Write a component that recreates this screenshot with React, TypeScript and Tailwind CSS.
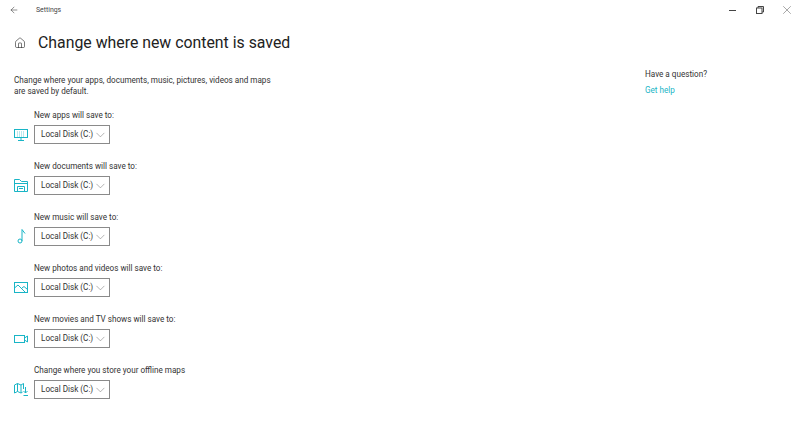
import { ArrowLeft, ChevronDown, Home, X } from "lucide-react"
import type { ReactNode } from "react"

const stroke = { fill: "none", stroke: "currentColor", strokeWidth: 1 }

const icons: Record<string, ReactNode> = {
  apps: (
    <svg width="14" height="12" viewBox="0 0 14 12" {...stroke}>
      <rect x="0.500" y="0.500" width="13" height="8" />
      <path d="M3 3h8M3 5h8M3 7h8" strokeDasharray="1 1" strokeOpacity="0.6" />
      <path d="M7 9v2M4 11.500h6" />
    </svg>
  ),
  docs: (
    <svg width="14" height="13" viewBox="0 0 14 13" {...stroke}>
      <path d="M.5 12.500V.5h5l2 2h6v10z" />
      <path d="M.5 4.500h13M3.500 12.500v-5h7v5M5 9.500h4" />
    </svg>
  ),
  music: (
    <svg width="9" height="15" viewBox="0 0 9 15" {...stroke}>
      <circle cx="3" cy="12" r="2" />
      <path d="M5 12V.5l3 4" />
    </svg>
  ),
  photos: (
    <svg width="14" height="11" viewBox="0 0 14 11" {...stroke}>
      <rect x="0.500" y="0.500" width="13" height="10" />
      <path d="M.5 6l3.500-3 7.500 7.500M8 6l2-1.500 3.500 3" />
    </svg>
  ),
  movies: (
    <svg width="14" height="8" viewBox="0 0 14 8" {...stroke}>
      <rect x="0.500" y="0.500" width="10" height="7" />
      <path d="M10.500 3l3-2v6l-3-2" />
    </svg>
  ),
  maps: (
    <svg width="14" height="13" viewBox="0 0 14 13" {...stroke}>
      <path d="M.5 2l3-1.500L7 2l2.500-1.500V6M.5 2v8l3-1.500L7 10l1.500-.8M3.500.5v8M7 2v8" />
      <path d="M11.500 4v6M9.500 8l2 2 2-2M9.500 12.500h4.500" />
    </svg>
  ),
}

const rows = [
  { label: "New apps will save to:", icon: "apps" },
  { label: "New documents will save to:", icon: "docs" },
  { label: "New music will save to:", icon: "music" },
  { label: "New photos and videos will save to:", icon: "photos" },
  { label: "New movies and TV shows will save to:", icon: "movies" },
  { label: "Change where you store your offline maps", icon: "maps" },
]

function SaveRow({ label, icon }: { label: string; icon: string }) {
  return (
    <div className="flex flex-col">
      <div className="ml-[34px] h-[20px] whitespace-nowrap text-[8.150px] leading-[20px] text-[#333]">{label}</div>
      <div className="flex items-center">
        <div className="flex w-[34px] justify-center pl-[8px] text-[#19b5c6]">{icons[icon]}</div>
        <div className="flex h-[19px] w-[76px] items-center justify-between border border-[#8a8a8a] pl-[6px] pr-[1px] text-[8.150px] text-[#333]">
          <span className="whitespace-nowrap">Local Disk (C:)</span>
          <ChevronDown size={16} strokeWidth={0.8} className="text-[#666]" />
        </div>
      </div>
    </div>
  )
}

export default function App() {
  return (
    <div className="flex h-[426px] w-[800px] flex-col overflow-hidden bg-white font-['Roboto',sans-serif] text-[#222]">
      <div className="flex h-[20px] items-center justify-between pl-[9px]">
        <div className="flex items-center gap-[17px]">
          <ArrowLeft size={10} strokeWidth={1.2} />
          <span className="text-[6.900px] text-[#444]">Settings</span>
        </div>
        <div className="flex items-center text-[#444]">
          <div className="flex w-[27px] justify-center">
            <div className="h-px w-[7px] bg-[#444]" />
          </div>
          <div className="flex w-[27px] justify-center">
            <svg width="8" height="8" viewBox="0 0 8 8" fill="none" stroke="currentColor" strokeWidth="1">
              <rect x="0.500" y="2" width="5.500" height="5.500" />
              <path d="M2 2V.5h5.500V6H6" />
            </svg>
          </div>
          <div className="flex w-[27px] justify-center">
            <X size={14} strokeWidth={0.8} />
          </div>
        </div>
      </div>
      <div className="flex flex-1">
        <div className="flex w-[645px] flex-col pl-[14px]">
          <div className="mt-[10px] flex h-[26px] items-center gap-[12px]">
            <Home size={12} strokeWidth={1.2} />
            <h1 className="whitespace-nowrap text-[15.850px] font-normal text-[#222]">Change where new content is saved</h1>
          </div>
          <p className="mt-[19px] w-[262px] text-[8.150px] leading-[10.500px] text-[#333]">
            Change where your apps, documents, music, pictures, videos and maps are saved by default.
          </p>
          <div className="-ml-[14px] mt-[9px] flex flex-col gap-[12px]">
            {rows.map((r) => (
              <SaveRow key={r.icon} label={r.label} icon={r.icon} />
            ))}
          </div>
        </div>
        <div className="flex flex-col pt-[47px]">
          <div className="text-[8.150px] leading-[14px] text-[#333]">Have a question?</div>
          <div className="mt-[2px] text-[8.150px] leading-[14px] text-[#19b5c6]">Get help</div>
        </div>
      </div>
    </div>
  )
}
